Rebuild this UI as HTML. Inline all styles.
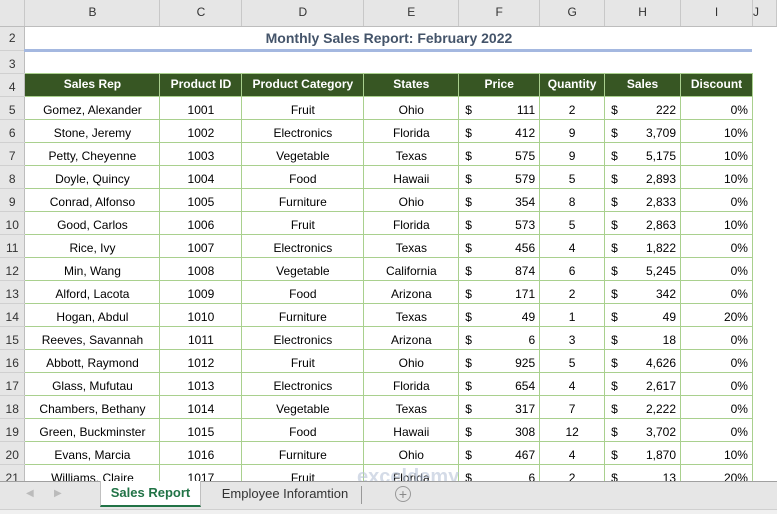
<!DOCTYPE html>
<html><head><meta charset="utf-8"><style>
*{margin:0;padding:0;box-sizing:border-box}
body{width:777px;height:514px;overflow:hidden;background:#fff;font-family:"Liberation Sans",Arial,sans-serif;font-size:12px;color:#000;position:relative}
table{position:absolute;left:0;top:0;border-collapse:collapse;table-layout:fixed}
td{height:23px;padding:0 4px;white-space:nowrap;overflow:hidden;text-align:center;border:1px solid #a9d08e;line-height:17px;vertical-align:bottom}
tr.ch td{height:26px;padding:0;background:#e6e6e6;border:none;border-right:1px solid #c8c8c8;border-bottom:1px solid #bdbdbd;color:#333;font-size:12px;vertical-align:middle;line-height:21px}
td.rh{background:#e6e6e6;border:none;border-right:1px solid #bdbdbd;border-bottom:1px solid #d0d0d0;color:#333;text-align:center;padding:0}
td.e{border:none}
tr.r2 td.t{border:none;border-bottom:3px solid #a4b8e0;font-weight:bold;color:#44546a;font-size:14px;padding:0;vertical-align:middle;line-height:20px}
tr.h td.g{background:#375623;color:#fff;font-weight:bold;border:1px solid #a9d08e;padding:0;vertical-align:middle;line-height:21px}
td.m{text-align:right;padding-left:6px}
td.m span{float:left}
td.r{text-align:right}
td.j{border:none}
#tabs{position:absolute;left:0;top:481px;width:777px;height:28px;background:#e6e6e6;border-top:1px solid #a0a0a0}
#bot{position:absolute;left:0;top:509px;width:777px;height:5px;background:#f0f0f0;border-top:1px solid #d0d0d0}
.tab1{position:absolute;left:100px;top:-1px;width:101px;height:26px;background:#fff;border-bottom:2px solid #217346;color:#217346;font-weight:bold;text-align:center;line-height:24px;font-size:13px;border-left:1px solid #c0c0c0;border-right:1px solid #c0c0c0}
.tab2{position:absolute;left:210px;top:0;width:150px;line-height:24px;color:#333;font-size:13px;text-align:center}
.sep{position:absolute;left:361px;top:4px;width:1px;height:18px;background:#999}
.arr{position:absolute;top:6px;color:#bbb;font-size:10px}
.plus{position:absolute;left:395px;top:4px;width:16px;height:16px;border:1px solid #999;border-radius:50%;color:#888;text-align:center;line-height:14px;font-size:14px}
.wm{position:absolute;left:357px;top:466px;color:#b8c4d8;font-weight:bold;font-size:20px;opacity:.6}
</style></head><body>
<table>
<colgroup><col style="width:25px"><col style="width:135px"><col style="width:82px"><col style="width:122px"><col style="width:95px"><col style="width:81px"><col style="width:65px"><col style="width:76px"><col style="width:72px"><col style="width:24px"></colgroup>
<tr class="ch"><td></td><td>B</td><td>C</td><td>D</td><td>E</td><td>F</td><td>G</td><td>H</td><td>I</td><td style="text-align:left">J</td></tr>
<tr class="r2"><td class="rh" style="height:24px;vertical-align:middle">2</td><td class="t" colspan="8">Monthly Sales Report: February 2022</td><td class="j"></td></tr>
<tr class="r3"><td class="rh">3</td><td class="e" colspan="8"></td><td class="j"></td></tr>
<tr class="h"><td class="rh">4</td><td class="g">Sales Rep</td><td class="g">Product ID</td><td class="g">Product Category</td><td class="g">States</td><td class="g">Price</td><td class="g">Quantity</td><td class="g">Sales</td><td class="g">Discount</td><td class="j"></td></tr>
<tr><td class="rh">5</td><td>Gomez, Alexander</td><td>1001</td><td>Fruit</td><td>Ohio</td><td class="m"><span>$</span>111</td><td>2</td><td class="m"><span>$</span>222</td><td class="r">0%</td><td class="j"></td></tr>
<tr><td class="rh">6</td><td>Stone, Jeremy</td><td>1002</td><td>Electronics</td><td>Florida</td><td class="m"><span>$</span>412</td><td>9</td><td class="m"><span>$</span>3,709</td><td class="r">10%</td><td class="j"></td></tr>
<tr><td class="rh">7</td><td>Petty, Cheyenne</td><td>1003</td><td>Vegetable</td><td>Texas</td><td class="m"><span>$</span>575</td><td>9</td><td class="m"><span>$</span>5,175</td><td class="r">10%</td><td class="j"></td></tr>
<tr><td class="rh">8</td><td>Doyle, Quincy</td><td>1004</td><td>Food</td><td>Hawaii</td><td class="m"><span>$</span>579</td><td>5</td><td class="m"><span>$</span>2,893</td><td class="r">10%</td><td class="j"></td></tr>
<tr><td class="rh">9</td><td>Conrad, Alfonso</td><td>1005</td><td>Furniture</td><td>Ohio</td><td class="m"><span>$</span>354</td><td>8</td><td class="m"><span>$</span>2,833</td><td class="r">0%</td><td class="j"></td></tr>
<tr><td class="rh">10</td><td>Good, Carlos</td><td>1006</td><td>Fruit</td><td>Florida</td><td class="m"><span>$</span>573</td><td>5</td><td class="m"><span>$</span>2,863</td><td class="r">10%</td><td class="j"></td></tr>
<tr><td class="rh">11</td><td>Rice, Ivy</td><td>1007</td><td>Electronics</td><td>Texas</td><td class="m"><span>$</span>456</td><td>4</td><td class="m"><span>$</span>1,822</td><td class="r">0%</td><td class="j"></td></tr>
<tr><td class="rh">12</td><td>Min, Wang</td><td>1008</td><td>Vegetable</td><td>California</td><td class="m"><span>$</span>874</td><td>6</td><td class="m"><span>$</span>5,245</td><td class="r">0%</td><td class="j"></td></tr>
<tr><td class="rh">13</td><td>Alford, Lacota</td><td>1009</td><td>Food</td><td>Arizona</td><td class="m"><span>$</span>171</td><td>2</td><td class="m"><span>$</span>342</td><td class="r">0%</td><td class="j"></td></tr>
<tr><td class="rh">14</td><td>Hogan, Abdul</td><td>1010</td><td>Furniture</td><td>Texas</td><td class="m"><span>$</span>49</td><td>1</td><td class="m"><span>$</span>49</td><td class="r">20%</td><td class="j"></td></tr>
<tr><td class="rh">15</td><td>Reeves, Savannah</td><td>1011</td><td>Electronics</td><td>Arizona</td><td class="m"><span>$</span>6</td><td>3</td><td class="m"><span>$</span>18</td><td class="r">0%</td><td class="j"></td></tr>
<tr><td class="rh">16</td><td>Abbott, Raymond</td><td>1012</td><td>Fruit</td><td>Ohio</td><td class="m"><span>$</span>925</td><td>5</td><td class="m"><span>$</span>4,626</td><td class="r">0%</td><td class="j"></td></tr>
<tr><td class="rh">17</td><td>Glass, Mufutau</td><td>1013</td><td>Electronics</td><td>Florida</td><td class="m"><span>$</span>654</td><td>4</td><td class="m"><span>$</span>2,617</td><td class="r">0%</td><td class="j"></td></tr>
<tr><td class="rh">18</td><td>Chambers, Bethany</td><td>1014</td><td>Vegetable</td><td>Texas</td><td class="m"><span>$</span>317</td><td>7</td><td class="m"><span>$</span>2,222</td><td class="r">0%</td><td class="j"></td></tr>
<tr><td class="rh">19</td><td>Green, Buckminster</td><td>1015</td><td>Food</td><td>Hawaii</td><td class="m"><span>$</span>308</td><td>12</td><td class="m"><span>$</span>3,702</td><td class="r">0%</td><td class="j"></td></tr>
<tr><td class="rh">20</td><td>Evans, Marcia</td><td>1016</td><td>Furniture</td><td>Ohio</td><td class="m"><span>$</span>467</td><td>4</td><td class="m"><span>$</span>1,870</td><td class="r">10%</td><td class="j"></td></tr>
<tr><td class="rh">21</td><td>Williams, Claire</td><td>1017</td><td>Fruit</td><td>Florida</td><td class="m"><span>$</span>6</td><td>2</td><td class="m"><span>$</span>13</td><td class="r">20%</td><td class="j"></td></tr>
</table>
<div class="wm">exceldemy</div>
<div id="tabs">
<span class="arr" style="left:26px">&#9664;</span><span class="arr" style="left:54px">&#9654;</span>
<div class="tab1">Sales Report</div>
<div class="tab2">Employee Inforamtion</div>
<div class="sep"></div>
<div class="plus">+</div>
</div>
<div id="bot"></div>
</body></html>
